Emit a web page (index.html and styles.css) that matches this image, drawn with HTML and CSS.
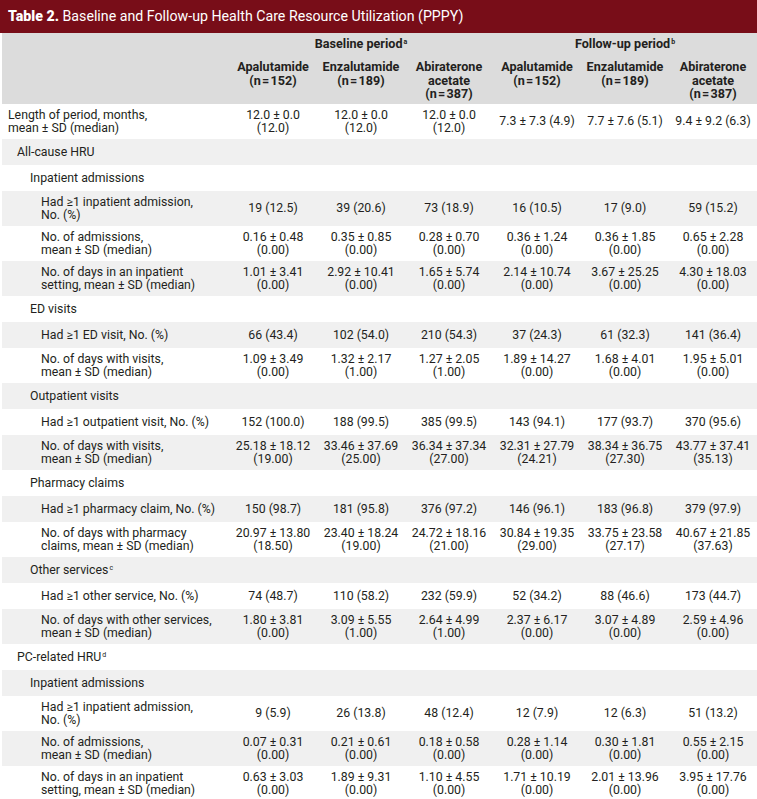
FILE: index.html
```html
<!DOCTYPE html>
<html lang="en">
<head>
<meta charset="utf-8">
<title>Table 2</title>
<link rel="stylesheet" href="styles.css">
</head>
<body>
<div class="page">
  <div class="title"><b>Table 2.</b> Baseline and Follow-up Health Care Resource Utilization (PPPY)</div>
  <table class="tbl">
    <colgroup>
      <col class="c-label"><col class="c-num"><col class="c-num"><col class="c-num"><col class="c-num"><col class="c-num"><col class="c-last">
    </colgroup>
    <thead>
      <tr class="h1">
        <th></th>
        <th colspan="3">Baseline period<sup>a</sup></th>
        <th colspan="3">Follow-up period<sup>b</sup></th>
      </tr>
      <tr class="h2">
        <th></th>
        <th>Apalutamide<br>(n&#8202;=&#8202;152)</th>
        <th>Enzalutamide<br>(n&#8202;=&#8202;189)</th>
        <th>Abiraterone<br>acetate<br>(n&#8202;=&#8202;387)</th>
        <th>Apalutamide<br>(n&#8202;=&#8202;152)</th>
        <th>Enzalutamide<br>(n&#8202;=&#8202;189)</th>
        <th>Abiraterone<br>acetate<br>(n&#8202;=&#8202;387)</th>
      </tr>
    </thead>
    <tbody>
      <tr class="w"><td class="l0">Length of period, months,<br>mean ± SD (median)</td><td>12.0 ± 0.0<br>(12.0)</td><td>12.0 ± 0.0<br>(12.0)</td><td>12.0 ± 0.0<br>(12.0)</td><td>7.3 ± 7.3 (4.9)</td><td>7.7 ± 7.6 (5.1)</td><td>9.4 ± 9.2 (6.3)</td></tr>
      <tr class="g"><td class="l1" colspan="7">All-cause HRU</td></tr>
      <tr class="w"><td class="l2" colspan="7">Inpatient admissions</td></tr>
      <tr class="g"><td class="l3">Had ≥1 inpatient admission,<br>No. (%)</td><td>19 (12.5)</td><td>39 (20.6)</td><td>73 (18.9)</td><td>16 (10.5)</td><td>17 (9.0)</td><td>59 (15.2)</td></tr>
      <tr class="w"><td class="l3">No. of admissions,<br>mean ± SD (median)</td><td>0.16 ± 0.48<br>(0.00)</td><td>0.35 ± 0.85<br>(0.00)</td><td>0.28 ± 0.70<br>(0.00)</td><td>0.36 ± 1.24<br>(0.00)</td><td>0.36 ± 1.85<br>(0.00)</td><td>0.65 ± 2.28<br>(0.00)</td></tr>
      <tr class="g"><td class="l3">No. of days in an inpatient<br>setting, mean ± SD (median)</td><td>1.01 ± 3.41<br>(0.00)</td><td>2.92 ± 10.41<br>(0.00)</td><td>1.65 ± 5.74<br>(0.00)</td><td>2.14 ± 10.74<br>(0.00)</td><td>3.67 ± 25.25<br>(0.00)</td><td>4.30 ± 18.03<br>(0.00)</td></tr>
      <tr class="w"><td class="l2" colspan="7">ED visits</td></tr>
      <tr class="g"><td class="l3">Had ≥1 ED visit, No. (%)</td><td>66 (43.4)</td><td>102 (54.0)</td><td>210 (54.3)</td><td>37 (24.3)</td><td>61 (32.3)</td><td>141 (36.4)</td></tr>
      <tr class="w"><td class="l3">No. of days with visits,<br>mean ± SD (median)</td><td>1.09 ± 3.49<br>(0.00)</td><td>1.32 ± 2.17<br>(1.00)</td><td>1.27 ± 2.05<br>(1.00)</td><td>1.89 ± 14.27<br>(0.00)</td><td>1.68 ± 4.01<br>(0.00)</td><td>1.95 ± 5.01<br>(0.00)</td></tr>
      <tr class="g"><td class="l2" colspan="7">Outpatient visits</td></tr>
      <tr class="w"><td class="l3">Had ≥1 outpatient visit, No. (%)</td><td>152 (100.0)</td><td>188 (99.5)</td><td>385 (99.5)</td><td>143 (94.1)</td><td>177 (93.7)</td><td>370 (95.6)</td></tr>
      <tr class="g"><td class="l3">No. of days with visits,<br>mean ± SD (median)</td><td>25.18 ± 18.12<br>(19.00)</td><td>33.46 ± 37.69<br>(25.00)</td><td>36.34 ± 37.34<br>(27.00)</td><td>32.31 ± 27.79<br>(24.21)</td><td>38.34 ± 36.75<br>(27.30)</td><td>43.77 ± 37.41<br>(35.13)</td></tr>
      <tr class="w"><td class="l2" colspan="7">Pharmacy claims</td></tr>
      <tr class="g"><td class="l3">Had ≥1 pharmacy claim, No. (%)</td><td>150 (98.7)</td><td>181 (95.8)</td><td>376 (97.2)</td><td>146 (96.1)</td><td>183 (96.8)</td><td>379 (97.9)</td></tr>
      <tr class="w"><td class="l3">No. of days with pharmacy<br>claims, mean ± SD (median)</td><td>20.97 ± 13.80<br>(18.50)</td><td>23.40 ± 18.24<br>(19.00)</td><td>24.72 ± 18.16<br>(21.00)</td><td>30.84 ± 19.35<br>(29.00)</td><td>33.75 ± 23.58<br>(27.17)</td><td>40.67 ± 21.85<br>(37.63)</td></tr>
      <tr class="g"><td class="l2" colspan="7">Other services<sup>c</sup></td></tr>
      <tr class="w"><td class="l3">Had ≥1 other service, No. (%)</td><td>74 (48.7)</td><td>110 (58.2)</td><td>232 (59.9)</td><td>52 (34.2)</td><td>88 (46.6)</td><td>173 (44.7)</td></tr>
      <tr class="g"><td class="l3">No. of days with other services,<br>mean ± SD (median)</td><td>1.80 ± 3.81<br>(0.00)</td><td>3.09 ± 5.55<br>(1.00)</td><td>2.64 ± 4.99<br>(1.00)</td><td>2.37 ± 6.17<br>(0.00)</td><td>3.07 ± 4.89<br>(0.00)</td><td>2.59 ± 4.96<br>(0.00)</td></tr>
      <tr class="w"><td class="l1" colspan="7">PC-related HRU<sup>d</sup></td></tr>
      <tr class="g"><td class="l2" colspan="7">Inpatient admissions</td></tr>
      <tr class="w"><td class="l3">Had ≥1 inpatient admission,<br>No. (%)</td><td>9 (5.9)</td><td>26 (13.8)</td><td>48 (12.4)</td><td>12 (7.9)</td><td>12 (6.3)</td><td>51 (13.2)</td></tr>
      <tr class="g"><td class="l3">No. of admissions,<br>mean ± SD (median)</td><td>0.07 ± 0.31<br>(0.00)</td><td>0.21 ± 0.61<br>(0.00)</td><td>0.18 ± 0.58<br>(0.00)</td><td>0.28 ± 1.14<br>(0.00)</td><td>0.30 ± 1.81<br>(0.00)</td><td>0.55 ± 2.15<br>(0.00)</td></tr>
      <tr class="w"><td class="l3">No. of days in an inpatient<br>setting, mean ± SD (median)</td><td>0.63 ± 3.03<br>(0.00)</td><td>1.89 ± 9.31<br>(0.00)</td><td>1.10 ± 4.55<br>(0.00)</td><td>1.71 ± 10.19<br>(0.00)</td><td>2.01 ± 13.96<br>(0.00)</td><td>3.95 ± 17.76<br>(0.00)</td></tr>
    </tbody>
  </table>
</div>
</body>
</html>
```

FILE: styles.css
```css
html, body {
  margin: 0;
  padding: 0;
  background: #ffffff;
}

.page {
  width: 757px;
  font-family: Roboto, "Liberation Sans", Arial, sans-serif;
  color: #231f20;
}

.title {
  height: 33px;
  line-height: 33px;
  padding-left: 8px;
  background: #780d18;
  color: #ffffff;
  font-size: 14.2px;
  white-space: nowrap;
}

.title b {
  font-weight: 900;
}

.tbl {
  margin-left: 2px;
  width: 755px;
  border-collapse: collapse;
  table-layout: fixed;
  font-size: 12.3px;
}

.c-label { width: 227px; }
.c-num { width: 88px; }
.c-last { width: 88px; }

.tbl thead th {
  background: #dcdcdc;
  font-weight: 700;
  font-size: 12.6px;
  text-align: center;
  padding: 0;
  line-height: 13.5px;
}

.tbl .h1 th {
  height: 22px;
  vertical-align: middle;
}

.tbl .h2 th {
  height: 49px;
  box-sizing: border-box;
  vertical-align: top;
  padding-top: 5px;
}

sup {
  font-size: 7px;
  line-height: 0;
  vertical-align: 4px;
  margin-left: 1px;
}

.tbl tbody tr {
  height: 26px;
}

.tbl tbody td {
  padding: 4.5px 0;
  line-height: 13px;
  text-align: center;
  vertical-align: middle;
  white-space: nowrap;
}

.tbl tbody tr.g td { background: #f0f0f0; }
.tbl tbody tr.w td { background: #ffffff; }

.tbl tbody td.l0,
.tbl tbody td.l1,
.tbl tbody td.l2,
.tbl tbody td.l3 {
  text-align: left;
}

.tbl tbody td.l0 { padding-left: 6px; }
.tbl tbody td.l1 { padding-left: 15px; }
.tbl tbody td.l2 { padding-left: 28px; }
.tbl tbody td.l3 { padding-left: 39px; }
```
